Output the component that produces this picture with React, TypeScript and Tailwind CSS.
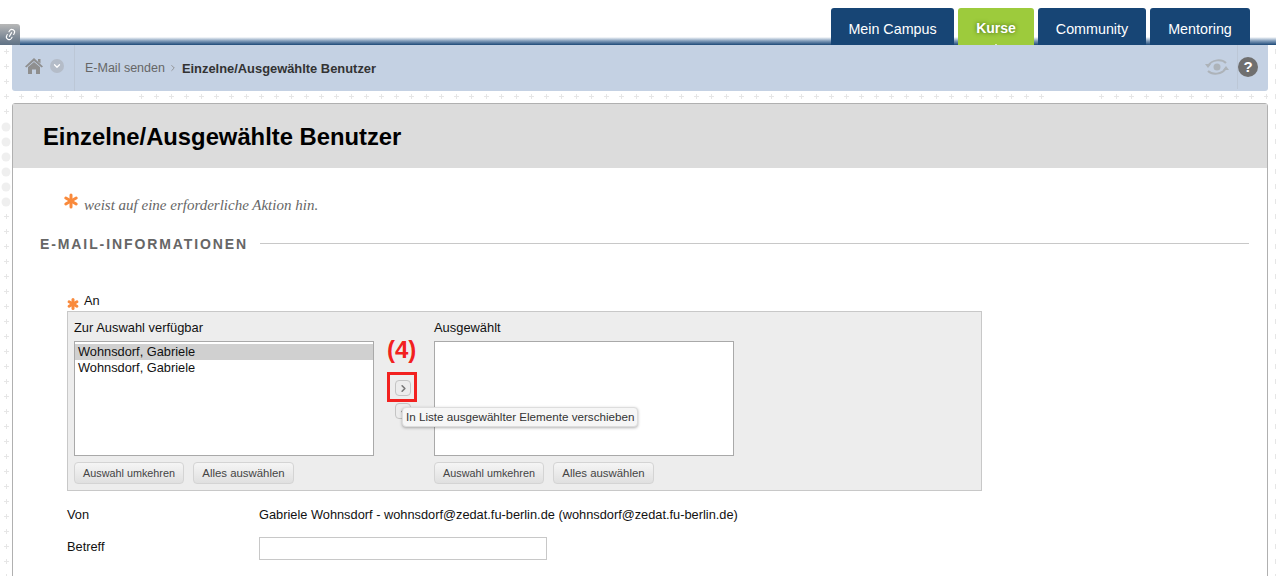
import { Asterisk, ChevronDown, ChevronLeft, ChevronRight, Link2 } from 'lucide-react';

const tabs = [
  { label: 'Mein Campus', width: 'w-[123px]' },
  { label: 'Kurse', width: 'w-[76px]', active: true },
  { label: 'Community', width: 'w-[108px]' },
  { label: 'Mentoring', width: 'w-[100px]' },
];

const blobs = [82, 97, 112, 127, 142, 157];

// Plus / blob wallpaper behind the page
function Wallpaper() {
  return (
    <svg className="absolute inset-0 h-full w-full">
      <defs>
        <pattern id="plus" width="15" height="15" patternUnits="userSpaceOnUse">
          <path d="M6 4h1v2h2v1H7v2H6V7H4V6h2z" fill="#e6e6e6" />
        </pattern>
        <pattern id="plusRight" width="15" height="15" patternUnits="userSpaceOnUse">
          <path d="M0 4h1v2h2v1H1v2H0V7h-2V6h2z" fill="#e6e6e6" />
        </pattern>
      </defs>
      <rect x="0" y="0" width="1268" height="531" fill="url(#plus)" />
      <rect x="1268" y="0" width="8" height="531" fill="url(#plusRight)" />
      <rect x="0" y="75" width="12" height="90" fill="#ffffff" />
      <rect x="100" y="47" width="36" height="11" fill="#ffffff" />
      <rect x="1053" y="47" width="38" height="11" fill="#ffffff" />
      {blobs.map((y) => (
        <circle key={y} cx="6" cy={y} r="4.5" fill="#efefef" />
      ))}
    </svg>
  );
}

function SwapButtons() {
  return (
    <div className="flex gap-[9px]">
      <button className="h-[22px] w-[110px] rounded-sm border border-[#d4d4d4] bg-gradient-to-b from-[#f5f5f5] to-[#e0e0e0] text-[10.8px] text-[#444]">
        Auswahl umkehren
      </button>
      <button className="h-[22px] w-[101px] rounded-sm border border-[#d4d4d4] bg-gradient-to-b from-[#f5f5f5] to-[#e0e0e0] pt-[1px] text-[11.4px] text-[#444]">
        Alles auswählen
      </button>
    </div>
  );
}

function HomeIcon() {
  return (
    <svg width="18" height="16" viewBox="0 0 18 16" fill="#8f8f8f">
      <path d="M9 0 18 8.5 16.6 9.6 9 3 1.4 9.6 0 8.5z" />
      <path d="M13 1h2.5v4.5L13 3.5z" />
      <path d="M9 4l6 5v7h-4v-4.5H7V16H3V9z" />
    </svg>
  );
}

function EyeIcon() {
  return (
    <svg width="24" height="18" viewBox="0 0 24 18" fill="none" stroke="#adb3b9" strokeWidth="2">
      <path d="M3 8C7 1 17 1 21 5" />
      <path d="M21 10C17 17 7 17 3 13" />
      <path d="M0 6h6l-3 4z" fill="#adb3b9" stroke="none" />
      <path d="M18 12h6l-3-4z" fill="#adb3b9" stroke="none" />
      <circle cx="12" cy="9" r="3.5" fill="#adb3b9" stroke="none" />
    </svg>
  );
}

export default function App() {
  return (
    <div className="h-[576px] w-[1276px] overflow-hidden bg-white font-['Liberation_Sans',Arial,sans-serif] text-[12.8px] text-[#111]">
      {/* Top tabs */}
      <div className="relative flex h-[45px] items-end justify-end gap-1 pr-[26px]">
        <div className="absolute inset-x-0 bottom-0 h-2 bg-gradient-to-b from-[#ffffff] via-[#7f9ab8] to-[#1c4a78]" />
        <div className="absolute bottom-0 left-0 flex h-[21px] w-5 items-center justify-center rounded-tr-[3px] bg-gradient-to-b from-[#b8b8b8] to-[#5f7184]">
          <Link2 size={13} strokeWidth={2} className="-rotate-[60deg] text-white" />
        </div>
        {tabs.map((tab) => (
          <div
            key={tab.label}
            className={`relative flex h-[37px] items-center justify-center rounded-t-[3px] text-white ${tab.width} ${
              tab.active
                ? 'bg-[#9dcb3c] pt-[4px] text-[14px] font-bold [text-shadow:0_0_4px_#3d6410]'
                : 'bg-[#174575] pt-[6px] text-[14.3px]'
            }`}
          >
            {tab.label}
            {tab.active && <div className="absolute bottom-0 left-[37px] h-px w-[2px] bg-[#dcedb5]" />}
          </div>
        ))}
      </div>

      <div className="relative pl-3 pr-2">
        <Wallpaper />

        <div className="relative w-[1256px]">
          {/* Breadcrumb bar */}
          <div className="flex h-[46px] items-center rounded-b-[3px] bg-[#c4d1e3]">
            <div className="flex h-full w-[63px] items-center gap-[7px] border-r border-[#bcc7d6] pb-1 pl-[13px]">
              <HomeIcon />
              <div className="flex h-[14px] w-[14px] items-center justify-center rounded-full bg-[#b4bcc8]">
                <ChevronDown size={10} strokeWidth={3} className="text-white" />
              </div>
            </div>
            <div className="flex items-center gap-[3.5px] pl-[10px] pt-[1px] text-[12.5px] text-[#666]">
              <span>E-Mail senden</span>
              <ChevronRight size={10} className="text-[#888]" />
              <span className="text-[12.9px] font-bold text-[#333]">Einzelne/Ausgewählte Benutzer</span>
            </div>
            <div className="ml-auto flex h-full items-center pb-[2px]">
              <EyeIcon />
              <div className="ml-[8px] flex h-full items-center border-l border-[#bcc7d6] pr-[10px]">
                <div className="flex h-5 w-5 items-center justify-center rounded-full bg-[#6f6f6f] text-[15px] font-bold text-white">
                  ?
                </div>
              </div>
            </div>
          </div>

          {/* Content panel */}
          <div className="mt-3 h-[600px] rounded-t-[3px] border border-[#b0b0b0] bg-white">
            <div className="flex h-[64px] items-center bg-[#dcdcdc] pl-[30px] pt-[1px] text-[23.8px] font-bold text-black">
              Einzelne/Ausgewählte Benutzer
            </div>

            <div className="flex h-[66px] items-center pl-[46px] pt-[9px]">
              <Asterisk size={24} strokeWidth={3} className="mb-[10px] shrink-0 text-[#f98a3c]" />
              <span className="ml-[1px] font-['Liberation_Serif',Georgia,serif] text-[15px] italic text-[#666]">
                weist auf eine erforderliche Aktion hin.
              </span>
            </div>

            <div className="flex items-center pl-[27px] pr-[18px]">
              <span className="text-[14px] font-bold tracking-[1.9px] text-[#666]">E-MAIL-INFORMATIONEN</span>
              <div className="mb-[2px] ml-[12px] h-px flex-1 bg-[#c8c8c8]" />
            </div>

            <div className="pl-[54px] pt-[39px]">
              <div className="flex h-[17px] items-center">
                <Asterisk size={18} strokeWidth={4} className="-ml-[3px] mt-[3px] shrink-0 text-[#f98a3c]" />
                <span className="mb-[3px] ml-[2px]">An</span>
              </div>

              {/* Picker */}
              <div className="flex h-[180px] w-[915px] border border-[#c8c8c8] bg-[#ededed] pl-[6px] pt-[6px]">
                <div className="w-[300px]">
                  <div className="h-[23px] text-[12.9px]">Zur Auswahl verfügbar</div>
                  <div className="h-[115px] border border-[#a9a9a9] bg-white pt-[2px] text-[12.8px] leading-[16px]">
                    <div className="bg-[#d0d0d0] pl-[3px]">Wohnsdorf, Gabriele</div>
                    <div className="pl-[3px]">Wohnsdorf, Gabriele</div>
                  </div>
                  <div className="mt-[6px]">
                    <SwapButtons />
                  </div>
                </div>

                <div className="relative w-[60px]">
                  <div className="absolute left-[13px] top-[20px] text-[24px] font-bold leading-none text-[#f2211f]">
                    (4)
                  </div>
                  <div className="absolute left-[13px] top-[54px] h-[30px] w-[30px] border-[3px] border-[#f2211f]" />
                  <div className="absolute left-[21px] top-[62px] flex h-4 w-4 items-center justify-center rounded-sm border border-[#c4c4c4] bg-[#ececec]">
                    <ChevronRight size={11} strokeWidth={3.5} className="text-[#777]" />
                  </div>
                  <div className="absolute left-[21px] top-[85px] flex h-4 w-4 items-center justify-center rounded-sm border border-[#c4c4c4] bg-[#ececec]">
                    <ChevronLeft size={11} strokeWidth={3.5} className="text-[#777]" />
                  </div>
                  <div className="absolute left-[28px] top-[89px] z-10 flex h-[20px] w-[236px] items-center whitespace-nowrap rounded-sm border border-[#ddd] bg-[#f6f6f6] pl-[3px] text-[11.65px] text-[#333] shadow-[0_1px_3px_rgba(0,0,0,0.3)]">
                    In Liste ausgewählter Elemente verschieben
                  </div>
                </div>

                <div className="w-[300px]">
                  <div className="h-[23px] text-[12.9px]">Ausgewählt</div>
                  <div className="h-[115px] border border-[#a9a9a9] bg-white" />
                  <div className="mt-[6px]">
                    <SwapButtons />
                  </div>
                </div>
              </div>

              <div className="mt-[16px] flex h-[16px] items-center">
                <div className="w-[192px]">Von</div>
                <div>Gabriele Wohnsdorf - wohnsdorf@zedat.fu-berlin.de (wohnsdorf@zedat.fu-berlin.de)</div>
              </div>

              <div className="mt-[14px] flex items-start">
                <div className="w-[192px]">Betreff</div>
                <input className="h-[23px] w-[288px] border border-[#c8c8c8] bg-white" readOnly />
              </div>
            </div>
          </div>
        </div>
      </div>
    </div>
  );
}
